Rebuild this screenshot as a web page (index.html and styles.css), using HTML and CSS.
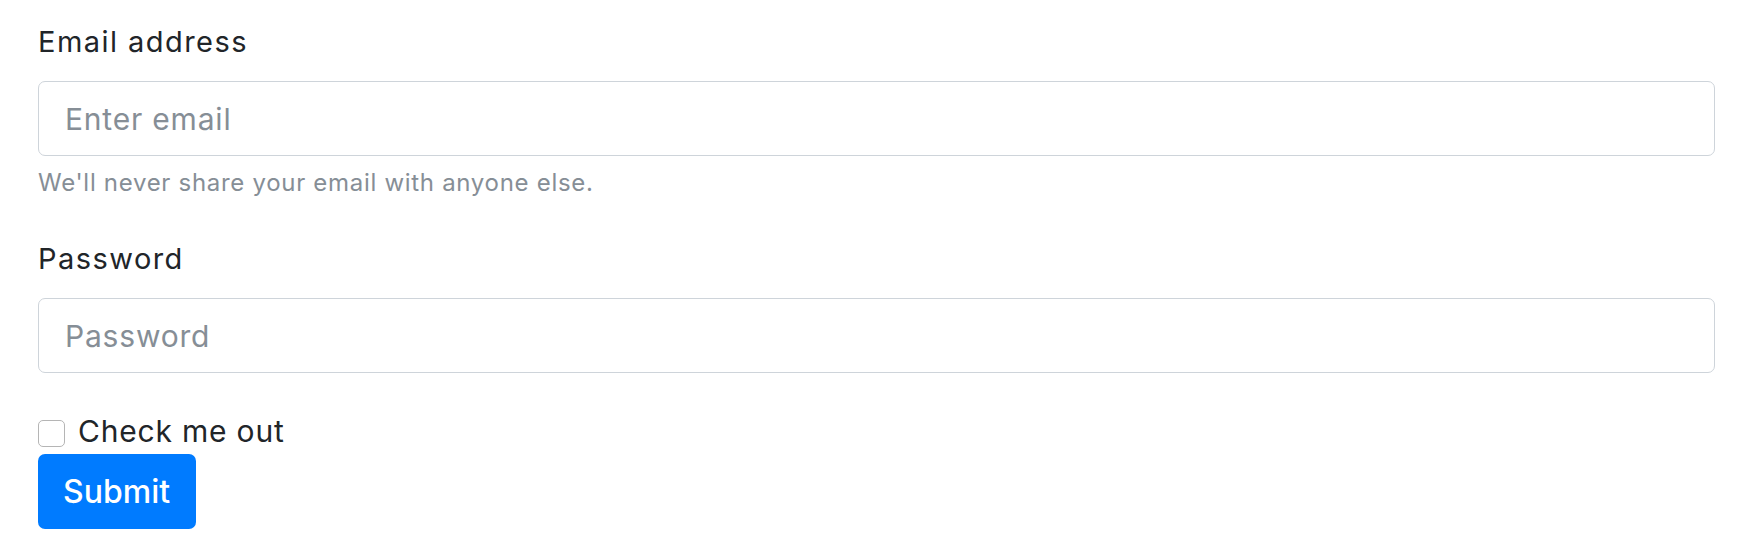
FILE: index.html
```html
<!DOCTYPE html>
<html lang="en">
<head>
<meta charset="utf-8">
<title>Form</title>
<link rel="stylesheet" href="styles.css">
</head>
<body>
<form class="form">
  <div class="group group-email">
    <label class="label" for="email">Email address</label>
    <input class="control" id="email" type="email" placeholder="Enter email">
    <small class="help">We'll never share your email with anyone else.</small>
  </div>
  <div class="group group-password">
    <label class="label" for="pw">Password</label>
    <input class="control" id="pw" type="password" placeholder="Password">
  </div>
  <div class="check">
    <input class="check-box" id="chk" type="checkbox">
    <label class="check-label" for="chk">Check me out</label>
  </div>
  <button class="btn" type="submit">Submit</button>
</form>
</body>
</html>
```

FILE: styles.css
```css
html, body {
  margin: 0;
  background: #ffffff;
}
body {
  padding: 21px 25px 0 38px;
  font-family: Inter, "Noto Sans", sans-serif;
  color: #212529;
}
.form {
  display: flex;
  flex-direction: column;
  align-items: stretch;
}
.group {
  display: flex;
  flex-direction: column;
}
.group-email {
  margin-bottom: 37px;
}
.label {
  font-size: 29px;
  line-height: 42px;
  letter-spacing: 1.45px;
  margin-bottom: 18px;
  color: #212529;
}
.control {
  box-sizing: border-box;
  width: 100%;
  height: 75px;
  margin: 0;
  padding: 0 26px;
  border: 1px solid #ced4da;
  border-radius: 7px;
  font-family: Inter, "Noto Sans", sans-serif;
  font-size: 30px;
  letter-spacing: 0.8px;
  color: #495057;
  background: #fff;
  outline: none;
}
.control::placeholder {
  color: #868e96;
  opacity: 1;
}
.help {
  margin-top: 9px;
  font-size: 24px;
  line-height: 36px;
  letter-spacing: 0.7px;
  color: #868e96;
}
.check {
  display: flex;
  align-items: center;
  margin-top: 40px;
  height: 36px;
}
.check-box {
  appearance: none;
  -webkit-appearance: none;
  box-sizing: border-box;
  width: 27px;
  height: 27px;
  margin: 4px 13px 0 0;
  border: 1px solid #b5b5b5;
  border-radius: 5px;
  background: #fff;
}
.check-label {
  font-size: 30px;
  line-height: 36px;
  letter-spacing: 0.8px;
  color: #212529;
}
.btn {
  align-self: flex-start;
  margin-top: 5px;
  box-sizing: border-box;
  width: 158px;
  height: 75px;
  padding: 0 25px;
  border: none;
  border-radius: 7px;
  background: #007bff;
  color: #fff;
  font-family: Inter, "Noto Sans", sans-serif;
  font-size: 32px;
  font-weight: 500;
  text-align: left;
}
```
